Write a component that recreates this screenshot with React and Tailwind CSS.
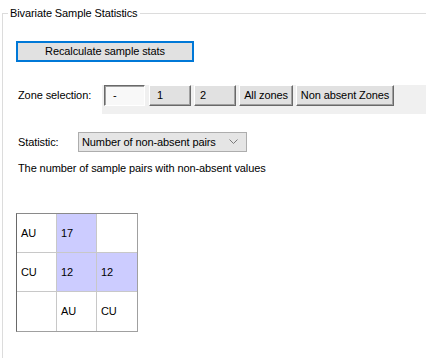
import React from 'react';

const raised = "h-[21px] bg-[#e1e1e1] border border-t-white border-l-white border-b-[#696969] border-r-[#696969] shadow-[inset_-1px_-1px_0_#a0a0a0] text-black";

const cells = [
    [{ t: 'AU' }, { t: '17', hi: true }, { t: '' }],
    [{ t: 'CU' }, { t: '12', hi: true }, { t: '12', hi: true }],
    [{ t: '' }, { t: 'AU' }, { t: 'CU' }],
];

const App = () => {
    return (
        <div className="w-[426px] h-[358px] bg-white overflow-hidden text-[11px] tracking-[-0.1px] text-black font-['Liberation_Sans',Arial,sans-serif]">
            <div className="relative mt-[13px] ml-[2px] h-[400px] border-l border-t border-[#dcdcdc]">
                <span className="absolute -top-[8px] left-[5px] bg-white px-[2px] leading-[14px]">Bivariate Sample Statistics</span>

                <button className="mt-[27px] ml-[13px] w-[178px] h-[21px] bg-[#e1e1e1] border-2 border-[#0078d7] text-center">
                    Recalculate sample stats
                </button>

                <div className="flex items-start mt-[23px]">
                    <span className="ml-[15px] w-[84px] mt-[3px] leading-[14px]">Zone selection:</span>
                    <div className="flex-1 h-[29px] bg-[#f0f0f0] pl-[2px] flex items-start">
                        <button className="w-[41px] h-[21px] bg-[#f8f8f8] border border-t-[#696969] border-l-[#696969] border-b-white border-r-white shadow-[inset_1px_1px_0_#a0a0a0] text-left px-[8px]">-</button>
                        <button className={`ml-[4px] w-[42px] text-left px-[7px] ${raised}`}>1</button>
                        <button className={`ml-[3px] w-[42px] text-left px-[5px] ${raised}`}>2</button>
                        <button className={`ml-[3px] w-[54px] text-center ${raised}`}>All zones</button>
                        <button className={`ml-[3px] w-[98px] text-center ${raised}`}>Non absent Zones</button>
                    </div>
                </div>

                <div className="flex items-center mt-[18px]">
                    <span className="ml-[15px] w-[60px]">Statistic:</span>
                    <div className="w-[169px] h-[20px] bg-[#e5e5e5] border border-[#adadad] flex items-center justify-between pl-[3px] pr-[8px]">
                        <span>Number of non-absent pairs</span>
                        <svg width="9" height="6" viewBox="0 0 9 6" fill="none" stroke="#7a7a7a" strokeWidth="1">
                            <path d="M0.5 0.5 L4.5 4.5 L8.5 0.5" />
                        </svg>
                    </div>
                </div>

                <p className="ml-[15px] mt-[9px] leading-[14px]">The number of sample pairs with non-absent values</p>

                <div className="ml-[13px] mt-[38px] w-[122px] border border-[#a0a0a0] border-l-[#696969] border-t-[#8a8a8a] grid grid-cols-[40px_40px_40px] grid-rows-[39px_39px_39px]">
                    {cells.flat().map((c, i) => (
                        <div
                            key={i}
                            className={`flex items-center pl-[4px] border-[#c8c8c8] ${i % 3 !== 2 ? 'border-r' : ''} ${i < 6 ? 'border-b' : ''} ${c.hi ? 'bg-[#ccccff]' : 'bg-white'}`}
                        >
                            {c.t}
                        </div>
                    ))}
                </div>
            </div>
        </div>
    );
};

export default App;
